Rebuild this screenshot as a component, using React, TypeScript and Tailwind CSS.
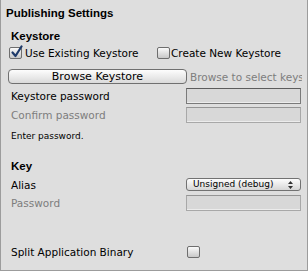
import React from "react";

const reg = { fontFamily: '"DejaVu Sans", Verdana, sans-serif' };
const bold = { fontFamily: '"Liberation Sans", Arial, sans-serif' };

function Check({ checked }: { checked?: boolean }) {
  return (
    <div className="relative w-[13px] h-[12px] rounded-[2px] border border-[#6e6e6e] bg-gradient-to-b from-[#fafafa] to-[#c8c8c8] shrink-0">
      {checked && (
        <svg className="absolute left-[0px] top-[-3px]" width="14" height="14" viewBox="0 0 14 14">
          <path d="M2.5 7.5 L5.5 11 L11.5 1.5" fill="none" stroke="#1e3a6a" strokeWidth="2.2" strokeLinecap="round" strokeLinejoin="round" />
        </svg>
      )}
    </div>
  );
}

function Field({ dark }: { dark?: boolean }) {
  return (
    <div
      className={
        "w-[115px] h-[16px] bg-[#d8d8d8] border shadow-[inset_0_-1px_0_#ececec] " +
        (dark ? "border-[#7a7a7a] border-t-[#5c5c5c]" : "border-[#a8a8a8] border-t-[#959595]")
      }
    />
  );
}

export default function App() {
  return (
    <div className="w-[308px] h-[271px] bg-[#dedede] border-x border-b border-[#9c9c9c] overflow-hidden text-black" style={reg}>
      <div className="mt-[6px] pl-[5px] h-[14px] leading-[14px] text-[11.5px] font-bold" style={bold}>
        Publishing Settings
      </div>
      <div className="mt-[9px] pl-[10px] h-[14px] leading-[14px] text-[11.5px] font-bold" style={bold}>
        Keystore
      </div>
      <div className="mt-[3px] h-[14px] flex items-center text-[10.5px] leading-[14px]">
        <div className="pl-[8px] w-[156px] flex items-center gap-[3px]">
          <Check checked />
          <span>Use Existing Keystore</span>
        </div>
        <div className="flex items-center gap-[1px]">
          <Check />
          <span>Create New Keystore</span>
        </div>
      </div>
      <div className="mt-[9px] h-[15px] flex items-center">
        <div className="ml-[7px] w-[179px] h-[15px] rounded-[4px] border border-[#707070] bg-gradient-to-b from-[#fdfdfd] to-[#dadada] flex items-center justify-center text-[11px] leading-[14px] shrink-0">
          Browse Keystore
        </div>
        <div className="ml-[3px] w-[112px] overflow-hidden whitespace-nowrap text-[10.5px] leading-[14px] text-[#7d7d7d]">
          Browse to select keystore
        </div>
      </div>
      <div className="mt-[4px] h-[16px] flex items-center text-[10.5px] leading-[14px]">
        <div className="pl-[10px] w-[185px]">Keystore password</div>
        <Field dark />
      </div>
      <div className="mt-[3px] h-[16px] flex items-center text-[10.5px] leading-[14px]">
        <div className="pl-[10px] w-[185px] text-[#7d7d7d]">Confirm password</div>
        <Field />
      </div>
      <div className="mt-[7px] pl-[10px] h-[12px] leading-[12px] text-[9px]">Enter password.</div>
      <div className="mt-[17px] pl-[10px] h-[14px] leading-[14px] text-[11.5px] font-bold" style={bold}>
        Key
      </div>
      <div className="mt-[5px] h-[13px] flex items-center text-[10.5px] leading-[14px]">
        <div className="pl-[10px] w-[185px]">Alias</div>
        <div className="relative w-[115px] h-[13px] rounded-[3px] border border-[#727272] bg-gradient-to-b from-[#fdfdfd] to-[#d6d6d6] flex items-center pl-[6px] text-[9px] leading-[11px]">
          Unsigned (debug)
          <svg className="absolute right-[7px] top-[2px]" width="5" height="8" viewBox="0 0 5 8">
            <path d="M0 3 L2.5 0 L5 3 Z M0 5 L2.5 8 L5 5 Z" fill="#333" />
          </svg>
        </div>
      </div>
      <div className="mt-[4px] h-[16px] flex items-center text-[10.5px] leading-[14px]">
        <div className="pl-[10px] w-[185px] text-[#7d7d7d]">Password</div>
        <Field />
      </div>
      <div className="mt-[35px] h-[12px] flex items-center text-[10.5px] leading-[14px]">
        <div className="pl-[10px] w-[186px]">Split Application Binary</div>
        <Check />
      </div>
    </div>
  );
}
